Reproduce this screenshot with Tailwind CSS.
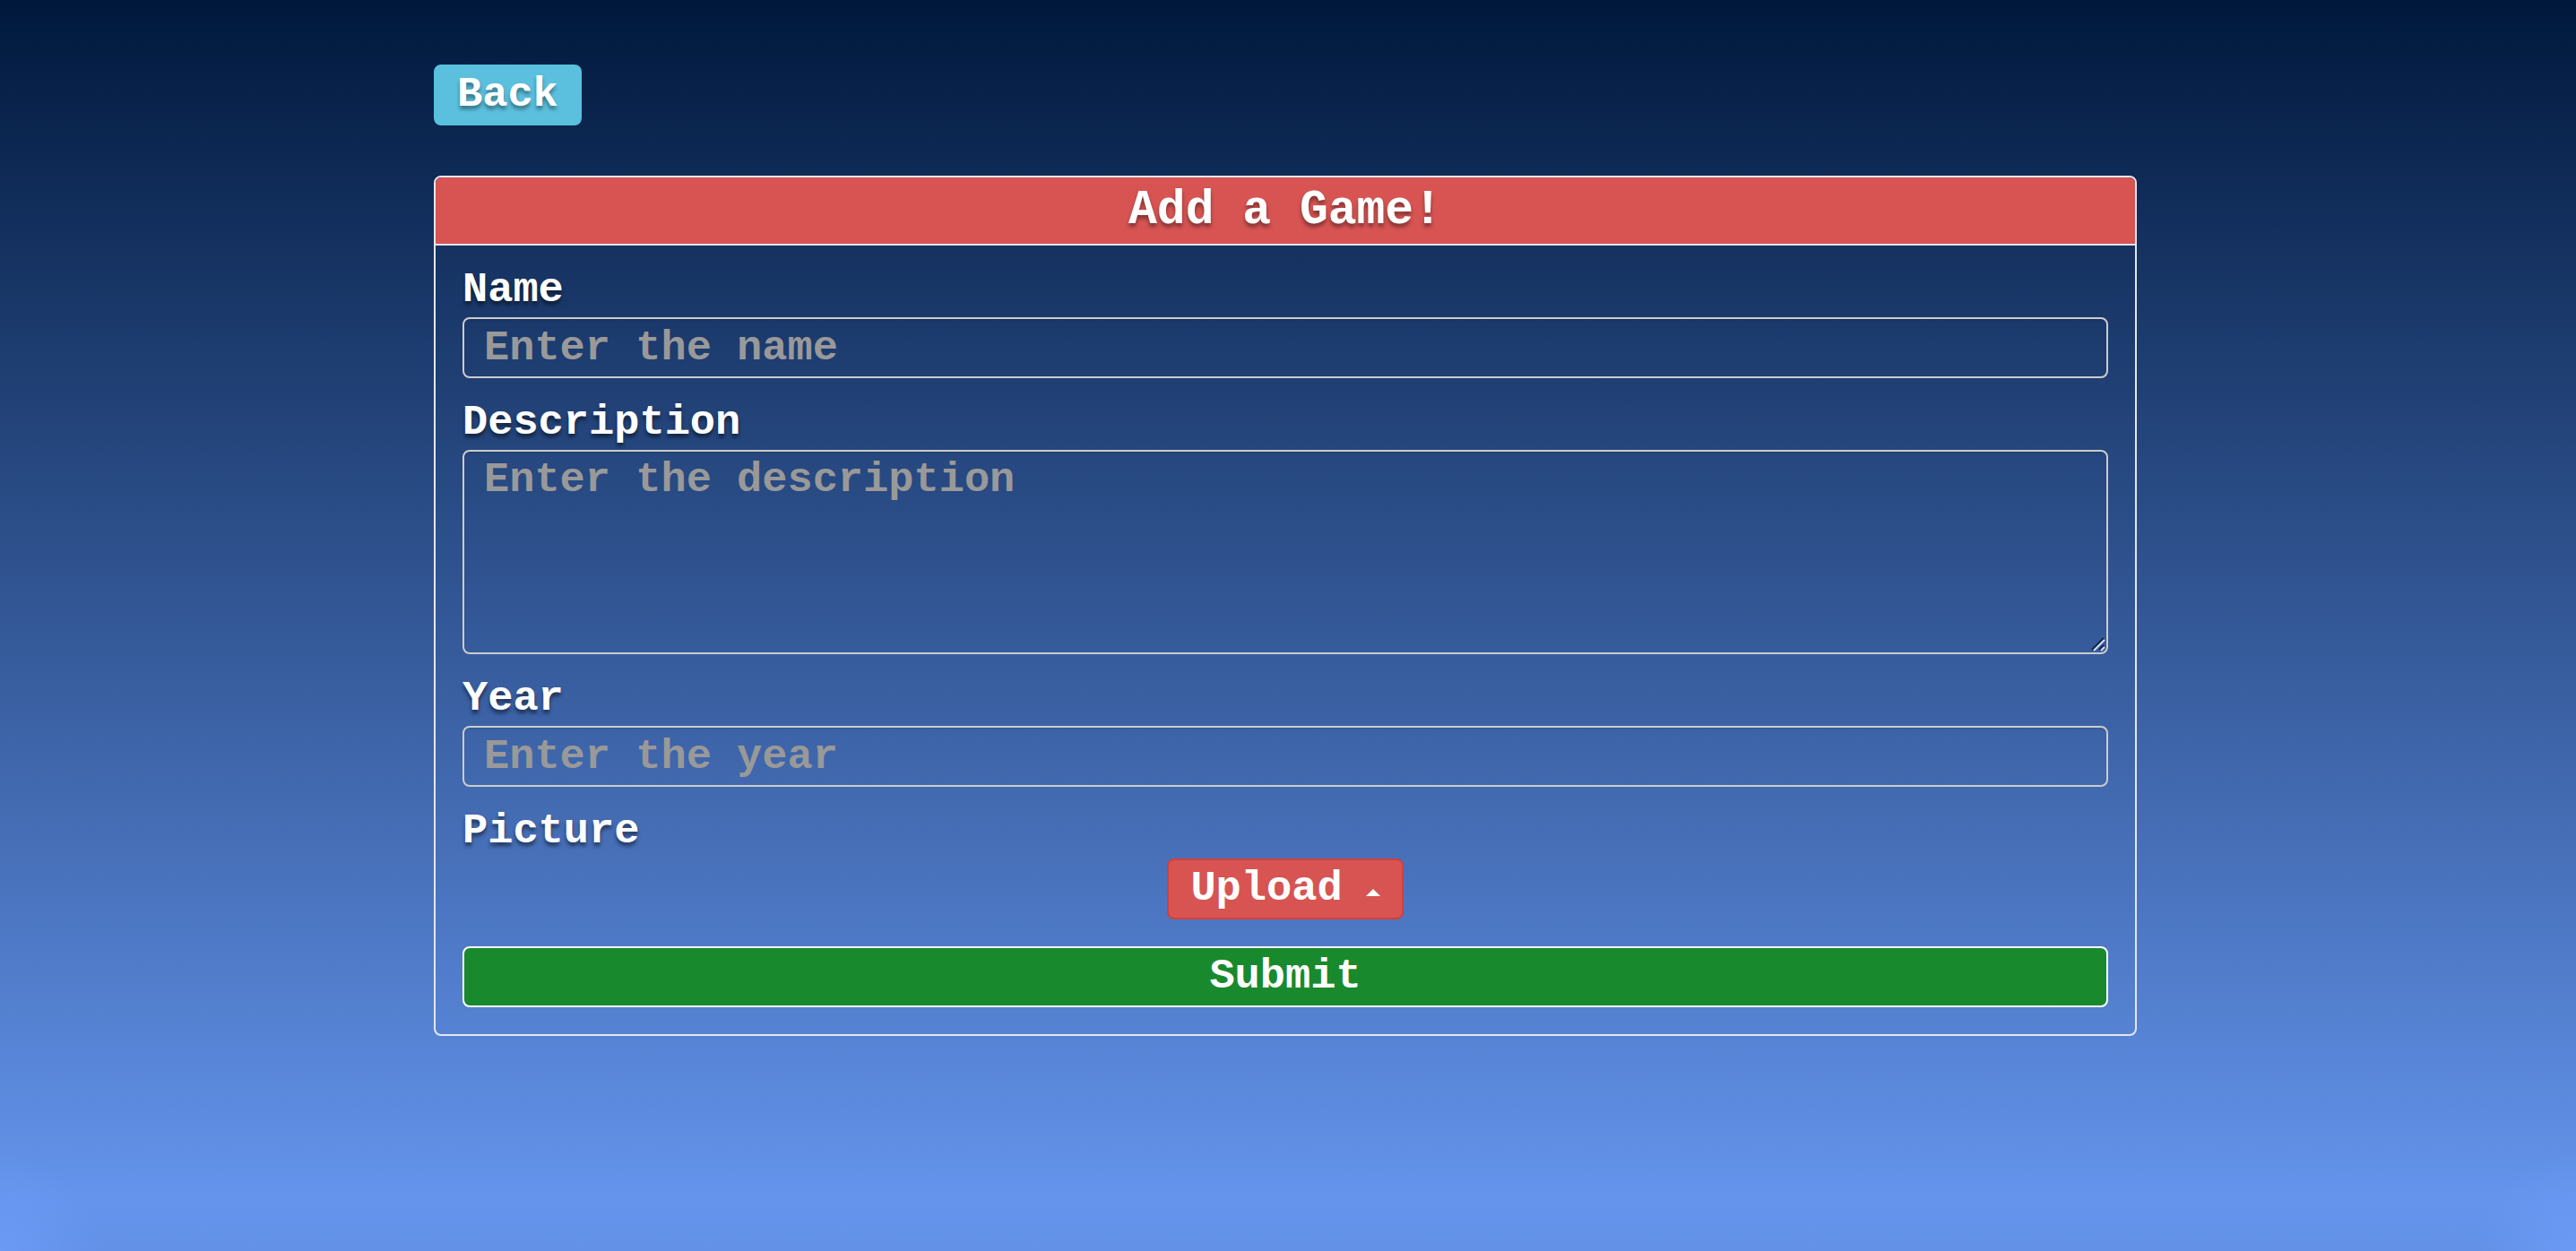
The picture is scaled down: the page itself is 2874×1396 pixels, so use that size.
<!DOCTYPE html>
<html lang="en">
<head>
<meta charset="utf-8">
<meta name="viewport" content="width=device-width, initial-scale=1">
<title>Add a Game!</title>
<script src="https://cdn.jsdelivr.net/npm/@tailwindcss/browser@4"></script>
</head>
<body class="min-h-screen bg-[radial-gradient(circle_at_0%_100%,#6d9cf8cc,#6d9cf800_110px),radial-gradient(circle_at_100%_100%,#6d9cf8cc,#6d9cf800_110px),linear-gradient(#00183c,#6494ec_96%,#6391e8)] font-['Liberation_Mono',monospace] text-[47px] leading-[40px] font-bold text-white">
<main class="py-[72px] pr-[6px]">
  <div class="mx-auto max-w-[1900px]">
    <a href="#" class="inline-flex h-[68px] items-center rounded-lg border-2 border-[#57bfdc] bg-[#5bc0de] px-[24px] [text-shadow:0_4px_4px_rgb(0_0_0/0.4)]">Back</a>
    <section class="mt-[56px] rounded-lg border-2 border-[#e4e7ee]">
      <h1 class="rounded-t-md border-b-2 border-[#e4e7ee] bg-[#d75452] py-[17px] text-center text-[53px] leading-[40px] [text-shadow:0_4px_4px_rgb(0_0_0/0.4)]">Add a Game!</h1>
      <form class="flex flex-col gap-[30px] p-[30px]">
        <div class="flex flex-col gap-[10px]">
          <label for="name" class="self-start [text-shadow:0_4px_4px_rgb(0_0_0/0.5)]">Name</label>
          <input id="name" type="text" placeholder="Enter the name" class="h-[68px] w-full rounded-lg border-2 border-[#cccccc] bg-transparent px-[22px] py-[12px] leading-[40px] shadow-[inset_0_2px_2px_rgb(0_0_0/0.075)] placeholder:text-[#999999]">
        </div>
        <div class="flex flex-col gap-[10px]">
          <label for="description" class="self-start [text-shadow:0_4px_4px_rgb(0_0_0/0.5)]">Description</label>
          <div class="relative flex">
            <textarea id="description" placeholder="Enter the description" class="h-[228px] w-full resize-none rounded-lg border-2 border-[#cccccc] bg-transparent px-[22px] py-[12px] leading-[40px] shadow-[inset_0_2px_2px_rgb(0_0_0/0.075)] placeholder:text-[#999999]"></textarea>
            <svg class="pointer-events-none absolute right-[3px] bottom-[3px] size-[16px]" viewBox="0 0 16 16" fill="none" stroke-width="2" aria-hidden="true">
              <path d="M1 14 14 1M9 14 14 9" stroke="#10254d"/>
              <path d="M3 15 15 3M11 15 15 11" stroke="#d5dced"/>
            </svg>
          </div>
        </div>
        <div class="flex flex-col gap-[10px]">
          <label for="year" class="self-start [text-shadow:0_4px_4px_rgb(0_0_0/0.5)]">Year</label>
          <input id="year" type="text" placeholder="Enter the year" class="h-[68px] w-full rounded-lg border-2 border-[#cccccc] bg-transparent px-[22px] py-[12px] leading-[40px] shadow-[inset_0_2px_2px_rgb(0_0_0/0.075)] placeholder:text-[#999999]">
        </div>
        <div class="flex flex-col gap-[10px]">
          <label for="upload" class="self-start [text-shadow:0_4px_4px_rgb(0_0_0/0.5)]">Picture</label>
          <button id="upload" type="button" class="flex h-[68px] items-center gap-[26px] self-center rounded-lg border-2 border-[#d43f3a] bg-[#d75452] px-[24px]">Upload
            <svg class="mt-[8px] h-[8px] w-[16px]" viewBox="0 0 16 8" fill="currentColor" aria-hidden="true"><path d="M0 8 8 0l8 8z"/></svg>
          </button>
        </div>
        <button type="submit" class="h-[68px] w-full rounded-lg border-2 border-white bg-[#19892d]">Submit</button>
      </form>
    </section>
  </div>
</main>
</body>
</html>
